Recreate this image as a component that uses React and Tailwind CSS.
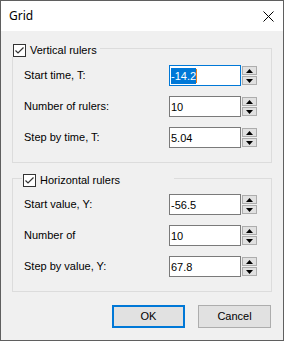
import React from 'react';

const rowsV = [
  { label: 'Start time, T:', value: '-14.2', focused: true },
  { label: 'Number of rulers:', value: '10' },
  { label: 'Step by time, T:', value: '5.04' },
];

const rowsH = [
  { label: 'Start value, Y:', value: '-56.5' },
  { label: 'Number of', value: '10' },
  { label: 'Step by value, Y:', value: '67.8' },
];

function CheckBox() {
  return (
    <svg width="13" height="13" viewBox="0 0 13 13" className="shrink-0">
      <rect x="0.5" y="0.5" width="12" height="12" fill="#ffffff" stroke="#333333" />
      <path d="M2.5 6.5 L5 9 L10.5 3.5" fill="none" stroke="#333333" strokeWidth="1.2" />
    </svg>
  );
}

function Spinner() {
  return (
    <div className="flex flex-col gap-[1px] ml-[1px] self-start mt-[1px]">
      <div className="w-[15px] h-[9px] border border-[#adadad] bg-[#e1e1e1] flex items-center justify-center">
        <svg width="7" height="4" viewBox="0 0 7 4">
          <path d="M0 4 L3.5 0 L7 4 Z" fill="#000000" />
        </svg>
      </div>
      <div className="w-[15px] h-[9px] border border-[#adadad] bg-[#e1e1e1] flex items-center justify-center">
        <svg width="7" height="4" viewBox="0 0 7 4">
          <path d="M0 0 L3.5 4 L7 0 Z" fill="#000000" />
        </svg>
      </div>
    </div>
  );
}

function Row({ label, value, focused }) {
  return (
    <div className="flex items-center h-[21px]">
      <div className="w-[156px] pl-[11px] whitespace-nowrap">{label}</div>
      <div
        className={`w-[72px] h-[21px] bg-white border flex items-center pl-[1px] ${
          focused ? 'border-[#0078d7]' : 'border-[#7a7a7a]'
        }`}
      >
        {focused ? (
          <>
            <span className="bg-[#0078d7] text-white h-[16px] leading-[16px]">{value}</span>
            <span className="w-[1px] h-[14px] bg-[#e8821e]" />
          </>
        ) : (
          <span className="leading-[16px]">{value}</span>
        )}
      </div>
      <Spinner />
    </div>
  );
}

function Group({ title, rows, legendLeft, legendWidth, height, padTop }) {
  return (
    <div className={`relative border border-[#dcdcdc] ${height} ${padTop}`}>
      <div
        className={`absolute top-[-6px] ${legendLeft} ${legendWidth} h-[14px] bg-[#f0f0f0] flex items-center gap-[4px] pl-[1px]`}
      >
        <CheckBox />
        <span className="whitespace-nowrap">{title}</span>
      </div>
      <div className="flex flex-col gap-[10px]">
        {rows.map((r) => (
          <Row key={r.label} {...r} />
        ))}
      </div>
    </div>
  );
}

export default function App() {
  return (
    <div className="w-[284px] h-[341px] border border-[#5f5f5f] bg-[#f0f0f0] flex flex-col text-[11px] text-black font-['Liberation_Sans',Arial,sans-serif]">
      <div className="h-[30px] bg-white flex items-center justify-between pl-[8px] pr-[9px] shrink-0">
        <span className="text-[12px] font-['Noto_Sans','Liberation_Sans',sans-serif]">Grid</span>
        <svg width="11" height="11" viewBox="0 0 11 11">
          <path d="M0.5 0.5 L10.5 10.5 M10.5 0.5 L0.5 10.5" stroke="#000000" strokeWidth="1" />
        </svg>
      </div>
      <div className="px-[11px] pt-[17px] flex flex-col">
        <Group
          title="Vertical rulers"
          rows={rowsV}
          legendLeft="left-[-1px]"
          legendWidth="w-[88px]"
          height="h-[115px]"
          padTop="pt-[16px]"
        />
        <div className="mt-[15px]">
          <Group
            title="Horizontal rulers"
            rows={rowsH}
            legendLeft="left-[9px]"
            legendWidth="w-[152px]"
            height="h-[114px]"
            padTop="pt-[15px]"
          />
        </div>
        <div className="mt-[13px] flex justify-end gap-[13px] pr-[1px]">
          <button className="w-[73px] h-[23px] border-2 border-[#0078d7] bg-[#e1e1e1] text-[11px]">
            OK
          </button>
          <button className="w-[73px] h-[23px] border border-[#adadad] bg-[#e1e1e1] text-[11px]">
            Cancel
          </button>
        </div>
      </div>
    </div>
  );
}
